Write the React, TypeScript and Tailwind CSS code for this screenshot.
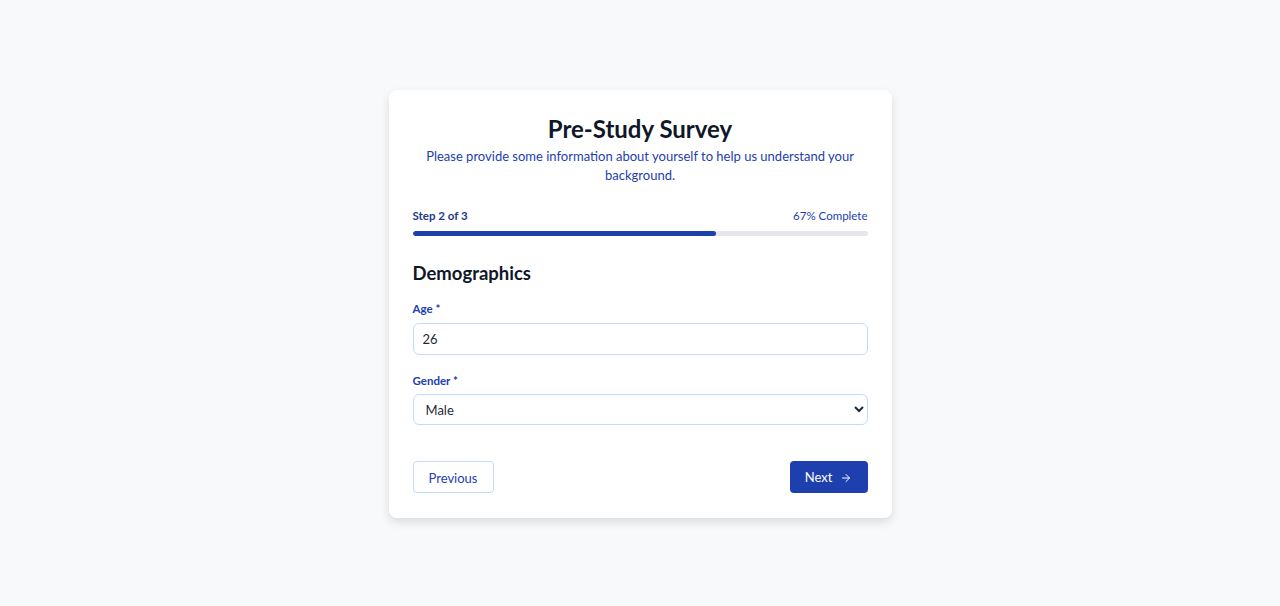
import { ArrowRight } from "lucide-react";

export default function App() {
  return (
    <div
      className="min-h-[606px] w-full bg-[#f8f9fb] flex justify-center pt-[90px]"
      style={{ fontFamily: 'Lato, "Noto Sans", sans-serif' }}
    >
      <div className="w-[503px] h-[428px] bg-white rounded-lg shadow-[0_4px_10px_rgba(0,0,0,0.12)] px-6 pt-[24px]">
        {/* header */}
        <div className="text-center">
          <h1 className="text-[24px] leading-[30px] font-bold text-[#0f172a]">Pre-Study Survey</h1>
          <p className="mt-[3px] text-[13px] leading-[19px] text-[#1e40af]">
            Please provide some information about yourself to help us understand your background.
          </p>
        </div>

        {/* progress */}
        <div className="mt-[23px]">
          <div className="flex justify-between text-[11.5px] leading-[16px]">
            <span className="font-bold text-[#1e3a8a]">Step 2 of 3</span>
            <span className="text-[#1e40af]">67% Complete</span>
          </div>
          <div className="mt-[7px] h-[5px] rounded-full bg-[#e5e7eb] overflow-hidden">
            <div className="h-full rounded-full bg-[#1e40af]" style={{ width: "66.7%" }} />
          </div>
        </div>

        {/* section */}
        <h2 className="mt-[24px] text-[18.5px] leading-[26px] font-bold text-[#0f172a]">Demographics</h2>

        <div className="mt-[15px]">
          <label className="block text-[11.5px] leading-[16px] font-bold text-[#1e40af]">Age *</label>
          <input
            type="number"
            defaultValue={26}
            className="mt-[6px] w-full h-[32px] border border-[#bfdbfe] rounded-md px-[9px] text-[13px] text-[#1f2937] outline-none"
          />
        </div>

        <div className="mt-[18px]">
          <label className="block text-[11.5px] leading-[16px] font-bold text-[#1e40af]">Gender *</label>
          <select
            defaultValue="Male"
            className="mt-[5px] w-full h-[31px] border border-[#bfdbfe] rounded-md px-[8px] text-[13px] text-[#1f2937] bg-white outline-none"
          >
            <option>Male</option>
            <option>Female</option>
            <option>Other</option>
          </select>
        </div>

        {/* nav */}
        <div className="mt-[36px] flex justify-between">
          <button className="h-[32px] w-[81px] border border-[#bfdbfe] rounded-[4px] text-[13px] leading-[18px] pt-px text-[#1e40af] bg-white">
            Previous
          </button>
          <button className="h-[32px] w-[78px] rounded-[4px] bg-[#1e40af] text-white text-[13px] pt-px flex items-center justify-center gap-[8px]">
            Next
            <ArrowRight size={12} strokeWidth={2} />
          </button>
        </div>
      </div>
    </div>
  );
}
